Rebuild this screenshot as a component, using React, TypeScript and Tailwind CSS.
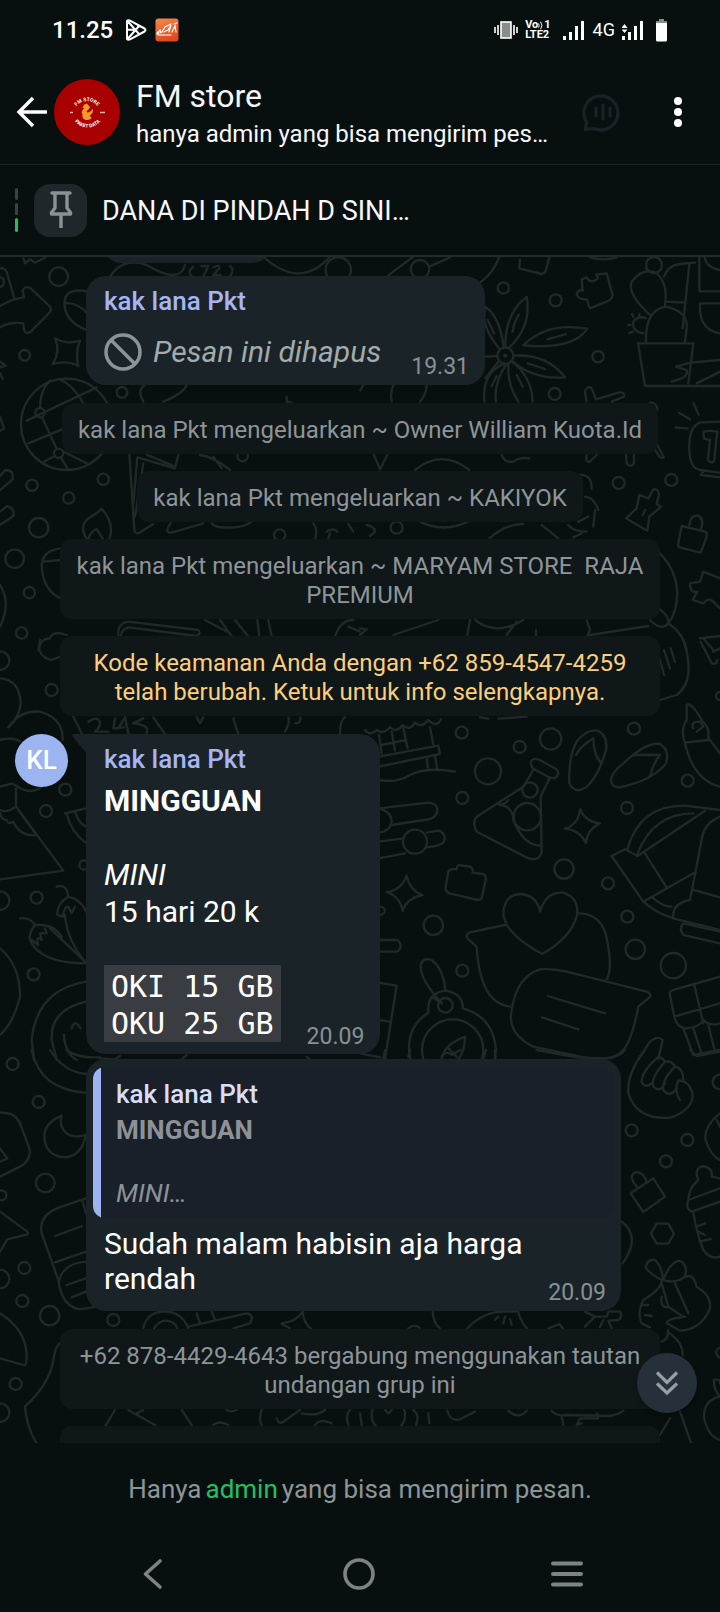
import type { ReactNode } from "react";

type Dot = [number, number, number];

function Doodles({ x, y, dots, paths }: { x: number; y: number; dots: Dot[]; paths: string[] }) {
  return (
    <g transform={`translate(${x} ${y}) scale(0.33333)`}>
      {dots.map(([cx, cy, r], i) => (
        <circle key={i} cx={cx} cy={cy} r={r} />
      ))}
      {paths.map((d, i) => (
        <path key={i} d={d} />
      ))}
    </g>
  );
}

function Wallpaper() {
  return (
    <svg
      aria-hidden="true"
      className="absolute inset-0 h-full w-full"
      viewBox="0 257 720 1186"
      preserveAspectRatio="xMidYMin slice"
      fill="none"
      stroke="#212828"
      strokeWidth="7"
      strokeLinecap="round"
      strokeLinejoin="round"
    >
      <Doodles
        x={0}
        y={250}
        dots={[
          [176, 80, 28], [74, 316, 16], [366, 427, 16], [310, 688, 17], [96, 706, 17], [206, 744, 17],
          [116, 833, 29], [44, 926, 28], [88, 1028, 17], [65, 1149, 17], [728, 618, 16], [839, 855, 17],
          [-4, 96, 16], [1015, 60, 38], [200, 523, 137], [120, 488, 14], [176, 610, 14],
        ]}
        paths={[
          "M0 168 Q40 145 72 142 L68 122 Q75 105 92 115 L150 170 Q156 178 150 186 L92 245 Q78 255 72 240 L70 220 Q30 215 0 232",
          "M165 265 Q200 285 240 272 Q225 310 235 348 Q200 330 158 342 Q183 305 165 265Z",
          "M80 512 L290 412 M85 580 L330 478 M120 474 Q120 420 150 392 M126 501 L170 597 M183 622 L205 660 M180 390 Q215 400 250 460 M164 618 L130 636 M188 604 L260 640",
          "M265 125 Q195 110 193 160 Q195 215 260 240 M193 160 Q230 155 262 190",
          "M0 55 Q14 52 20 66 L44 148 M0 335 L15 345 M0 352 L18 347 M0 370 L8 386 M0 500 L12 535 L0 542",
          "M0 678 L16 660 Q42 660 38 688 L0 720 M0 785 L22 768 Q44 775 40 798 L0 825",
          "M262 870 Q235 830 265 805 Q300 785 305 776 Q345 820 328 868 M265 870 Q270 845 290 837 L308 866",
          "M388 610 L403 840 Q408 855 418 848 L460 822 M412 622 L400 760 M430 640 L405 800 M412 622 L525 655 L535 615 M440 614 L525 650 M600 615 Q640 620 690 660 M640 620 L665 655",
          "M512 820 Q490 850 515 848 L610 820 M635 820 Q650 835 680 832 Q730 835 755 815",
          "M185 895 Q125 900 125 950 Q130 1020 180 1045 M130 935 L180 930 M0 1005 Q35 1060 0 1130",
          "M355 1160 Q350 1120 385 1115 L595 1140 Q605 1150 590 1158 L385 1132 Q365 1138 362 1158",
          "M115 1200 Q120 1165 150 1165 Q160 1140 200 1155",
          "M330 80 Q370 20 440 45 Q540 105 555 45 M580 50 Q560 65 575 78 M605 48 L625 48 L612 76 M640 52 Q660 42 658 55 L640 75 H662 M690 48 Q705 60 690 78",
          "M790 20 Q900 120 990 20 M70 25 L75 40 L90 28 L105 38 L135 24",
          "M430 455 Q410 420 435 405 M490 455 Q550 430 560 405 M860 440 V455 L875 458",
          "M615 1110 L690 1150 M660 1110 L700 1165 M705 1110 L745 1160 M772 1110 L778 1160 M805 1110 L815 1160 M1005 1160 Q1020 1110 1060 1110 M1045 1130 L1080 1145",
          "M940 820 Q955 840 945 865 M980 845 Q1000 830 1012 845 M1045 822 L1060 845 M985 865 L990 850",
        ]}
      />
      <Doodles
        x={360}
        y={250}
        dots={[
          [180, 58, 28], [430, 114, 17], [587, 151, 18], [714, 320, 17], [584, 432, 18], [776, 699, 18],
          [934, 690, 18], [110, 833, 18], [436, 317, 24], [436, 317, 3], [882, 45, 24],
        ]}
        paths={[
          "M80 80 L160 20 M208 50 L270 22 M418 20 Q400 70 362 96",
          "M480 30 L478 55 L545 72 Q556 70 558 60 L568 22 M690 22 Q730 34 770 22",
          "M665 88 L680 82 Q690 100 708 90 Q718 80 708 74 L740 70 L758 135 Q755 150 740 155 L690 175 L680 148 Q655 150 650 132 Q655 118 668 122Z",
          "M436 290 Q435 190 500 140 Q515 230 447 293 M458 245 Q462 215 476 195",
          "M490 286 Q560 215 682 236 Q640 300 495 286 M563 268 L618 252",
          "M460 317 Q560 310 615 382 Q520 390 455 332 M503 340 L555 357",
          "M420 298 Q360 230 376 170 Q420 200 431 292 M383 210 L402 250",
          "M432 341 Q365 370 373 455 M440 341 Q400 400 408 455 M446 341 Q440 400 475 455 M456 335 Q515 380 518 455 M395 408 L410 378 M470 375 L488 410",
          "M375 320 L410 318 M376 385 L415 335",
          "M870 195 Q800 130 815 95 Q850 50 890 70 Q925 100 915 165 M912 80 Q925 45 960 42 L1005 38 M988 42 L968 235 M915 155 L975 158",
          "M858 275 Q855 180 918 170 Q985 185 980 235 L975 275 M834 280 L1000 280 L985 400 M834 280 L855 408 L1080 408",
          "M858 205 Q835 195 820 215 Q815 245 850 250 M820 200 L816 192 M812 225 L804 225 M818 245 L808 250 M838 200 L838 192",
          "M948 350 L990 338 L1080 330 M948 350 L980 360 Q985 375 965 385 L935 395 M1010 400 L1080 365",
          "M1018 22 L1018 124 L1080 124 M1020 160 H1080 M1020 160 Q1015 240 1080 250 M1034 22 Q1040 55 1080 60",
          "M680 455 L675 425 Q682 405 695 415 L708 448 L775 428 Q795 425 792 440 L755 455 M870 458 Q890 455 892 480",
          "M890 580 L910 620 Q915 625 900 622 L885 600 M680 615 Q675 635 688 636 L710 615 M798 615 L800 640 Q812 655 822 640 L822 615",
          "M1080 515 L1020 517 Q990 530 988 580 Q985 655 1020 660 L1080 668 M1030 665 L1022 675 L1080 682 M1030 545 Q1050 540 1072 545 L1062 635 Q1050 640 1044 630 L1050 570 L1032 566Z M947 533 L983 535 M957 488 L990 508 M1000 460 L1016 494",
          "M838 735 L865 745 L880 718 Q895 715 897 735 L890 762 L903 770 L868 800 L862 842 L798 805 L830 775Z M848 795 L856 780",
          "M965 828 L1035 845 Q1043 848 1040 860 L1022 908 L958 892 Q952 888 955 880Z M988 825 Q992 795 1012 796 Q1035 805 1022 840",
          "M990 1000 L1020 995 L1030 965 L1080 985 M990 1000 Q990 1030 1012 1025 L998 1050 L1030 1060 Q1045 1040 1060 1055 L1080 1075",
          "M165 660 Q245 595 328 660 M180 815 Q250 850 325 815 M42 615 L60 658 L82 615 M425 615 Q435 640 460 635 Q480 620 508 625",
          "M655 675 Q695 670 695 715 M675 740 Q700 740 715 780 M705 780 L700 830 M625 825 Q640 845 680 845 M655 815 L685 800 M665 850 L640 862",
          "M388 865 Q440 820 490 822 M545 825 L595 865 M20 825 Q45 830 45 845 L30 858",
          "M895 905 Q950 960 952 1030 Q950 1090 925 1120 Q905 1145 870 1110 M890 1070 Q930 1100 925 1120 M925 1120 Q970 1150 980 1200 M690 1155 L865 1128",
          "M330 1110 L322 1155 M345 1110 Q410 1160 490 1110 M470 1115 L440 1155 M680 1110 L690 1140 L682 1158 M528 1140 L528 1158 M100 1155 L235 1110",
          "M0 1135 L20 1138 L0 1155 M1020 1165 L1080 1158 M1030 1165 L1060 1200 M95 455 Q90 425 100 405 M180 455 Q200 430 200 405 M1 420 L10 405",
        ]}
      />
      <Doodles
        x={0}
        y={640}
        dots={[
          [0, 62, 28], [155, 150, 18], [196, 449, 18], [138, 513, 18], [110, 773, 18], [0, 782, 28],
          [101, 1003, 18], [252, 675, 14],
        ]}
        paths={[
          "M120 0 Q108 50 155 60 L180 50 M0 115 Q60 120 62 190 Q60 230 25 262 M25 262 Q60 210 120 215 Q190 235 188 300",
          "M0 300 Q40 290 60 305 M0 440 L38 430 Q90 470 125 440 M48 445 V500 L190 692 L0 718 M48 500 Q20 520 0 510",
          "M0 520 Q5 540 20 540 Q25 555 40 545 Q60 590 110 585 L55 510",
          "M195 520 L258 505 M200 522 Q215 580 258 608 M225 515 Q235 550 258 560",
          "M220 230 L245 280 M460 232 L495 282 M590 232 L600 250 L610 232 M700 235 L715 282 M855 275 Q870 250 865 232 M885 250 Q905 250 900 232 M1020 280 Q1020 240 1035 232",
          "M265 245 Q295 225 300 250 Q300 262 285 275 H325 M355 265 L375 232 L385 280 M340 265 L372 262 M430 235 L400 250 Q450 255 440 278 M345 235 L340 265",
          "M170 740 Q200 730 205 770 Q245 780 258 815 M205 770 Q170 790 172 825 L190 830 Q190 800 205 800 L215 820 L225 800 M195 825 Q200 900 258 968",
          "M60 835 Q90 830 105 855 Q85 880 90 900 Q120 970 258 970 M105 855 Q160 850 185 890 M95 900 L115 915 Q105 885 125 900 L120 880 L140 880 L135 865 M150 865 L255 965",
          "M0 925 Q60 975 60 1070 Q40 1150 0 1185",
          "M258 1025 Q110 1050 95 1200 L102 1260 M258 1085 Q150 1110 155 1200 L170 1260 M192 1185 Q195 1240 230 1260 M215 1165 Q225 1135 242 1165",
          "M300 1255 L345 1258 L360 1248 M545 1258 L560 1245 M920 1250 L930 1258",
        ]}
      />
      <Doodles
        x={360}
        y={640}
        dots={[
          [305, 278, 18], [479, 321, 18], [572, 297, 32], [384, 394, 39], [307, 474, 18], [822, 266, 18],
          [983, 422, 18], [801, 504, 18], [612, 687, 29], [744, 730, 18], [220, 856, 29], [802, 830, 18],
          [826, 928, 29], [940, 977, 38], [307, 992, 18], [510, 450, 23], [502, 530, 41], [62, 812, 12],
          [165, 605, 36], [256, 1096, 22], [278, 1230, 92], [1080, 168, 12],
        ]}
        paths={[
          "M15 270 Q30 290 50 270 Q70 285 90 262 Q110 280 128 255 Q150 275 165 248 Q185 265 205 240 Q230 265 243 238 M57 285 L65 340 M95 275 L105 332 M130 265 L143 325 M65 315 L138 300 M210 262 L220 315",
          "M57 350 L235 317 L240 342 L57 380 M200 350 L203 382 M225 348 L232 388 M57 420 Q110 430 150 405 Q200 380 285 395 M360 232 L385 236 M415 236 L500 230",
          "M57 505 L205 488 Q235 490 232 515 Q225 535 205 538 L95 555 M57 505 Q95 515 95 545 Q90 575 57 578 M57 605 L130 595 M200 578 L235 572 Q260 580 252 605 Q245 618 200 622 M57 655 L135 640",
          "M512 370 Q515 352 535 358 L590 388 Q600 400 588 412 Q575 418 560 408 L518 385Z M520 390 L490 440 L350 530 Q335 550 350 575 L505 655 Q540 665 545 635 L542 470 L570 412",
          "M415 492 Q460 500 460 540 Q490 615 540 617 M420 495 Q440 490 445 480",
          "M628 430 Q625 350 650 305 Q680 265 715 272 Q745 290 738 330 Q715 410 680 440 Q645 465 628 430Z M648 345 Q660 320 700 295 Q700 340 720 365",
          "M755 430 Q745 405 790 370 Q860 305 900 312 Q930 330 918 370 Q880 420 780 442 Q760 442 755 430Z M820 345 L900 345 Q880 370 870 408",
          "M660 507 Q675 545 720 550 Q680 570 678 610 Q660 570 614 566 Q655 555 660 507Z M140 707 Q148 750 187 765 Q140 775 128 812 Q120 770 80 756 Q125 750 140 707Z",
          "M265 695 Q270 685 290 688 Q290 672 305 676 L330 680 Q340 685 338 698 L368 702 Q380 705 377 720 L365 775 Q360 782 345 778 L268 760 Q255 755 257 740Z",
          "M547 942 Q430 880 430 815 Q435 765 480 762 Q530 765 541 815 Q555 755 610 758 Q660 775 650 830 Q630 895 547 942Z",
          "M435 855 L330 877 Q312 885 325 898 L350 920 Q355 1000 375 1040 Q395 1090 450 1100 M655 820 Q720 820 738 885 Q760 985 740 1018",
          "M540 988 Q580 985 620 995 L860 1055 Q880 1065 865 1075 L835 1100 Q820 1180 800 1215 Q780 1260 700 1258 L520 1220 Q440 1180 455 1110 Q470 1010 540 988Z M563 1068 L735 1120 M546 1132 L655 1168",
          "M57 900 H110 Q122 905 122 918 Q120 932 110 935 H57 M57 1028 L110 1037 L75 1258 M57 1140 L90 1145",
          "M245 1088 Q180 1020 182 975 Q190 950 215 960 Q250 985 256 1050 M218 1072 L245 1090 M205 1118 Q200 1060 255 1052 Q310 1060 308 1105 Q400 1130 408 1230 L405 1260 M205 1118 Q140 1160 148 1240 L152 1260",
          "M245 1258 Q250 1215 315 1190 Q315 1230 295 1258 M262 1222 L290 1250",
          "M970 0 Q1010 120 950 165 L900 180 M900 60 L912 105 M912 30 L930 85 M932 25 L945 65",
          "M1022 5 L1055 70 Q1070 75 1072 60 M1060 35 L1080 25 M980 195 Q995 185 1028 245 Q1050 260 1045 300 L975 308 Q960 270 980 240Z M1000 265 Q990 245 1020 245 L1030 260 L1010 275 M975 310 Q1000 420 1080 440 M1050 300 L1080 340",
          "M803 625 Q840 495 975 497 L1080 510 M833 640 Q880 520 1000 520 M755 648 L795 628 L833 648 L1035 512 M755 648 L850 785 L1000 700 M855 640 L918 740 M1080 530 Q1030 550 1025 600 L990 780 Q935 790 940 835 L1080 870 M1000 750 L1080 772 M850 785 Q890 820 940 835 M880 775 Q910 800 935 800",
          "M970 850 L1080 875 M970 850 Q955 865 970 885 L1080 910",
          "M930 1065 Q925 1055 940 1050 L1080 1010 M930 1065 L943 1130 L1080 1090 M1003 1035 L1030 1150 M943 1130 Q950 1160 975 1165 Q1015 1165 1030 1140 Q1050 1160 1080 1150 M970 1165 L1000 1245 L1080 1230 M1000 1165 L1025 1240 M1045 1155 L1065 1235",
          "M835 1258 L870 1205 Q895 1185 908 1200 L895 1258",
        ]}
      />
      <Doodles
        x={0}
        y={1050}
        dots={[
          [38, 42, 18], [116, 156, 18], [136, 399, 28], [4, 436, 15], [73, 654, 18], [0, 687, 28],
          [67, 753, 18], [149, 797, 29], [340, 810, 18], [47, 1002, 18], [0, 1088, 28],
        ]}
        paths={[
          "M95 0 Q120 120 258 128 M150 0 Q190 65 258 72 M200 0 Q230 25 300 22",
          "M185 197 Q130 220 133 265 Q140 320 195 322 Q245 318 258 255 Q220 265 200 250 Q175 230 185 197Z",
          "M0 188 Q45 185 60 220 L88 295 Q95 330 60 350 L0 380 M0 295 L22 325 L0 335",
          "M0 485 L82 545 Q88 553 75 555 L22 568 L0 605",
          "M258 445 L170 475 Q115 500 125 550 L175 690 Q185 770 240 778 L290 770 M165 558 L246 528 M165 637 L258 605 M248 455 L258 490 M258 635 Q190 640 178 690 M200 705 L258 685 M215 742 L258 725",
          "M0 790 Q80 840 80 920 Q80 950 70 945 L0 925 M180 880 Q165 890 160 930 Q150 1000 75 1070 Q80 1130 108 1178",
          "M430 835 Q440 785 495 785 Q545 785 565 835 M462 835 Q480 810 500 812 Q525 815 532 835 M565 830 L740 790 Q765 795 750 820 L700 835 M590 790 L600 820 M635 785 L645 810",
          "M845 820 Q890 815 908 785 Q910 820 935 838 M845 822 L870 835",
          "M345 1080 L315 1130 M385 1080 L465 1125 M430 1080 L410 1090 M545 1080 L575 1125 M680 1080 Q695 1088 710 1080 M785 1080 Q775 1110 785 1125 M830 1105 Q835 1125 850 1115 L900 1080 M905 1090 Q950 1100 975 1080 M640 1125 Q655 1110 685 1125 M945 1125 Q960 1105 995 1120 M1045 1125 Q1035 1095 1050 1080",
        ]}
      />
      <Doodles
        x={360}
        y={1050}
        dots={[
          [815, 241, 18], [982, 270, 18], [918, 334, 18], [1080, 96, 22], [85, 1095, 50], [1085, 908, 16],
        ]}
        paths={[
          "M0 10 L60 22 M70 25 L75 0 M145 20 L150 0 M405 0 V25 M370 25 L378 0 M530 0 L650 22 L740 25 Q780 20 795 0 M245 20 Q260 0 275 15 L300 0 M990 0 L1010 18 L1080 5",
          "M855 0 Q800 70 805 130 Q830 210 930 203 Q1000 180 998 130 Q985 90 955 92 Q940 120 960 150 M890 25 Q845 65 845 95 Q855 120 880 95 M915 35 Q870 85 880 110 Q900 130 915 100 M945 50 Q905 90 910 120 Q930 145 950 115 M890 25 Q900 15 915 35 Q935 30 945 50 Q970 55 970 90",
          "M812 430 L880 385 L915 440 L850 486Z M832 412 Q800 375 830 366 Q855 370 860 398",
          "M890 521 L925 521 L942 551 L925 581 L890 581 L873 551Z",
          "M1080 190 Q1030 230 1037 270 Q1050 315 1080 330 M1070 210 L1080 230",
          "M1015 390 Q1000 355 1030 348 Q1060 355 1055 380 L1080 385 M1015 390 Q990 410 985 445 M985 450 L1080 415 M985 450 Q975 475 995 485 L1080 455 M1000 488 Q1010 550 1030 600 Q1050 630 1080 620 M1010 530 L1035 520 M1015 545 L1035 555 M1020 575 L1052 567",
          "M785 515 Q845 560 788 640",
          "M905 690 Q860 665 857 650 Q865 625 885 630 Q905 650 910 690 Q930 635 960 632 Q985 645 975 680 Q950 700 915 692 M905 695 Q900 720 850 750 Q830 790 845 820 L870 832 M850 765 L865 765 M855 795 L875 798 M905 700 L925 770 L970 800 M945 700 L985 790 M980 680 Q1000 670 1010 710 Q1060 740 1048 780 Q1020 840 960 842 L920 820 Q920 810 945 805 L975 800 M905 740 Q900 770 920 772 M925 840 Q925 870 905 875 M930 850 Q970 880 968 915",
          "M218 785 Q220 820 240 835 M322 835 Q370 785 430 785 L475 785 M475 785 Q480 810 500 835 M405 810 L415 800 M430 820 L435 800 M455 825 L450 808 M145 835 Q165 820 180 835 M565 835 L598 822 L608 835",
          "M675 785 L705 800 L675 830 M705 800 L740 800 L745 785 L780 785 Q790 800 775 810 L745 812 L755 835 M730 810 L720 832",
          "M0 1090 L5 1125 M160 1080 Q180 1095 168 1125 M205 1090 L208 1120 M75 1080 L85 1090 L95 1080 M262 1082 Q270 1115 300 1108 L345 1085 M445 1082 Q475 1110 500 1082 M575 1082 Q590 1100 620 1095 L750 1098 Q780 1092 790 1082 M605 1100 L610 1125 M650 1125 L660 1105 L715 1105 L710 1090 M650 1125 L665 1120",
          "M930 1105 L900 1155 M960 1085 L993 1178 M1062 990 Q1080 985 1080 1000 M1062 990 Q1060 1020 1080 1040 M1080 1040 Q1030 1050 1032 1105 Q1045 1160 1080 1170",
        ]}
      />
    </svg>
  );
}

function StatusBar() {
  return (
    <div className="flex h-[60px] items-center pl-[52px] pr-[53px] text-white">
      <span className="text-2xl font-medium">11.25</span>
      <svg className="ml-3 h-[22px] w-[22px]" viewBox="0 0 22 22" fill="none" stroke="#fff" strokeWidth="2" strokeLinejoin="round" aria-hidden="true">
        <path d="M2 2 Q3 .8 5 1.7 L19.5 9.5 Q21.3 11 19.5 12.5 L5 20.3 Q3 21.2 2 20Z M3 2.5 L14 15 M3 19.5 L14 7 M9 10.8 L2 10.8" />
      </svg>
      <svg className="ml-2 h-6 w-6" viewBox="0 0 24 24" aria-hidden="true">
        <defs>
          <linearGradient id="appTile" x1="0" y1="0" x2="0.3" y2="1">
            <stop offset="0" stopColor="#f58a4a" />
            <stop offset="1" stopColor="#dc4a22" />
          </linearGradient>
        </defs>
        <rect x="0.5" y="0.5" width="23" height="23" rx="3" fill="url(#appTile)" />
        <path d="M2 16 L5 12 L6 15 M7 14 L10 9 L16 6 M9 14 L13 12 L16 7 L14 14 M17 14 L20 8 L21 14 M19 6 L22 5 M3 17 H16" fill="none" stroke="#fff" strokeWidth="1.200" strokeLinecap="round" />
        <circle cx="3" cy="15" r="1.500" fill="#fff" />
      </svg>
      <div className="ml-auto flex items-center">
        <svg className="h-5 w-6" viewBox="0 0 24 20" aria-hidden="true">
          <rect x="7" y="2" width="10" height="16" fill="#8a8c8c" stroke="#fff" strokeWidth="1.600" />
          <path d="M1 7 V13 M4 5 V15 M20 5 V15 M23 7 V13" stroke="#fff" strokeWidth="1.600" />
        </svg>
        <div className="ml-[7px] flex flex-col text-[11px] font-bold leading-[10px]">
          <span className="flex items-center justify-between">
            Vo
            <svg className="h-[9px] w-[6px]" viewBox="0 0 6 9" fill="none" stroke="#fff" aria-hidden="true">
              <path d="M.5 2.5 Q2 4.5 .5 6.5 M2.5 .8 Q5.5 4.5 2.5 8.2" />
            </svg>
            1
          </span>
          <span>LTE2</span>
        </div>
        <svg className="ml-3 h-5 w-[22px]" viewBox="0 0 22 20" fill="#fff" aria-hidden="true">
          <path d="M0 16h3v4H0zM6 12h3v8H6zM12 6h3v14h-3zM18 1h3v19h-3z" />
        </svg>
        <span className="ml-2 text-lg">4G</span>
        <svg className="ml-[7px] h-5 w-[22px]" viewBox="0 0 22 20" fill="#fff" aria-hidden="true">
          <path d="M0 16h3v4H0zM6 12h3v8H6zM12 6h3v14h-3zM18 1h3v19h-3zM2.5 4L5.500 8H-.5zM2.500 13L-.5 9.500H5.500z" />
        </svg>
        <svg className="ml-3 h-6 w-[11px]" viewBox="0 0 11 24" aria-hidden="true">
          <path d="M3 1h5v2h3v3H0V3h3z" fill="#8a8c8c" />
          <path d="M0 5h11v17a1.500 1.500 0 0 1-1.500 1.500h-8A1.500 1.500 0 0 1 0 22z" fill="#fff" />
        </svg>
      </div>
    </div>
  );
}

function StoreLogo() {
  return (
    <svg className="h-[66px] w-[66px] shrink-0" viewBox="0 0 66 66" role="img" aria-label="FM store">
      <defs>
        <path id="arcTop" d="M20 35 A13 13 0 0 1 46 35" />
        <path id="arcBottom" d="M17 32 A16.500 16.500 0 0 0 50 32" />
      </defs>
      <circle cx="33" cy="33" r="33" fill="#a80000" />
      <text fontSize="5" fontWeight="700" fill="#fff" textAnchor="middle">
        <textPath href="#arcTop" startOffset="50%">FM STORE</textPath>
      </text>
      <text fontSize="5" fontWeight="700" fill="#fff" textAnchor="middle">
        <textPath href="#arcBottom" startOffset="50%">PAKET DATA</textPath>
      </text>
      <path d="M33 24.500 L35 27 Q37 28 34.500 30.500 Q31 33 34 33.500 Q38 32 38.500 29.500 Q40 33 37 35.500 Q34 37 38 38.500 Q36 41.500 32 41 Q27.500 40 28.500 35 Q26.500 33.500 29 30.500 Q31 29 28.500 28.500 Q29.500 25 33 24.500Z" fill="#f39a2b" />
      <path d="M16 33.500h3M46 33.500h5" stroke="#e8b0a8" strokeWidth="1.300" />
    </svg>
  );
}

function Header() {
  return (
    <header className="flex h-[105px] items-center border-b border-[#1c2425] pl-4 pr-[38px]">
      <button aria-label="Kembali" className="flex h-12 w-8 shrink-0 items-center">
        <svg className="h-8 w-8" viewBox="0 0 32 32" fill="none" stroke="#fff" strokeWidth="3.400" aria-hidden="true">
          <path d="M31 16H3M17 2L3 16l14 14" />
        </svg>
      </button>
      <div className="ml-1.5">
        <StoreLogo />
      </div>
      <div className="ml-4 min-w-0 pt-[3px]">
        <h1 className="truncate text-[32px] leading-9 text-[#f7f8fa]">FM store</h1>
        <p className="mt-1 truncate text-2xl leading-8 text-[#f7f8fa]">hanya admin yang bisa mengirim pes…</p>
      </div>
      <button aria-label="Obrolan suara" className="ml-auto shrink-0">
        <svg className="h-10 w-10" viewBox="0 0 40 40" fill="none" stroke="#1a2227" strokeWidth="3.200" strokeLinecap="round" strokeLinejoin="round" aria-hidden="true">
          <path d="M3.500 37.500 L4.500 30 A17 17 0 1 1 12 36.500 Z" />
          <path d="M14 16v8M21 13v14M28 16v8" />
        </svg>
      </button>
      <button aria-label="Opsi lainnya" className="ml-[52px] shrink-0">
        <svg className="h-8 w-2" viewBox="0 0 8 32" fill="#fff" aria-hidden="true">
          <circle cx="4" cy="5" r="4" />
          <circle cx="4" cy="16" r="4" />
          <circle cx="4" cy="27" r="4" />
        </svg>
      </button>
    </header>
  );
}

function PinnedMessage() {
  return (
    <section className="flex h-[92px] items-center border-b-2 border-[#232a2b] pl-[15px]">
      <div className="flex flex-col gap-[3px]">
        <span className="h-3 w-[3px] rounded-full bg-[#3a4244]" />
        <span className="h-3 w-[3px] rounded-full bg-[#3a4244]" />
        <span className="h-[14px] w-[3px] rounded-full bg-[#21c063]" />
      </div>
      <div className="ml-4 flex h-[53px] w-[53px] items-center justify-center rounded-2xl bg-[#20272a]">
        <svg className="h-10 w-6" viewBox="0 0 24 40" fill="none" stroke="#8a9294" strokeWidth="3.400" strokeLinejoin="round" aria-hidden="true">
          <path d="M3 3H21" strokeLinecap="round" />
          <path d="M6 3V18L2.500 22.500V24H21.500V22.500L18 18V3M12 24V38" />
        </svg>
      </div>
      <p className="ml-[15px] pt-[2px] text-[27px] leading-8 text-[#f7f8fa]">DANA DI PINDAH D SINI…</p>
    </section>
  );
}

function Notice({ children, tone = "text-[#8d9598]" }: { children: ReactNode; tone?: string }) {
  return (
    <p className={`max-w-full whitespace-pre-wrap rounded-xl bg-[#101719] px-4 pb-[9px] pt-[13px] text-center text-2xl leading-[29px] ${tone}`}>
      {children}
    </p>
  );
}

function Sender() {
  return <h2 className="text-[26px] font-medium leading-8 text-[#a5b5f5]">kak lana Pkt</h2>;
}

function Time({ children }: { children: string }) {
  return <time className="text-[23px] leading-7 text-[#879194]">{children}</time>;
}

function Chat() {
  return (
    <main className="relative overflow-hidden bg-[#070f0f]">
      <Wallpaper />
      <div className="relative flex flex-col">
        <div className="ml-[102px] h-[6px] w-[170px] overflow-hidden">
          <div className="-mt-10 h-[46px] rounded-[20px] bg-[#1a2428]" />
        </div>
        <article className="ml-[86px] mt-[13px] self-start rounded-[20px] bg-[#1a2428] pb-1 pl-[18px] pr-4 pt-[9px]">
          <Sender />
          <div className="flex items-end">
            <div className="flex items-center gap-[11px] pb-[10px] pt-4">
              <svg className="h-[38px] w-[38px]" viewBox="0 0 38 38" fill="none" stroke="#8b9598" strokeWidth="3.500" aria-hidden="true">
                <circle cx="19" cy="19" r="17" />
                <path d="M7 7L31 31" />
              </svg>
              <span className="text-[30px] italic leading-[38px] text-[#a3abad]">Pesan ini dihapus</span>
            </div>
            <span className="ml-[30px] flex">
              <Time>19.31</Time>
            </span>
          </div>
        </article>
        <div className="mx-[60px] my-[18px] flex flex-col items-center gap-[17px]">
          <Notice>kak lana Pkt mengeluarkan ~ Owner William Kuota.Id</Notice>
          <Notice>kak lana Pkt mengeluarkan ~ KAKIYOK</Notice>
          <Notice>{"kak lana Pkt mengeluarkan ~ MARYAM STORE  RAJA PREMIUM"}</Notice>
          <Notice tone="text-[#fbcf7c]">Kode keamanan Anda dengan +62 859-4547-4259 telah berubah. Ketuk untuk info selengkapnya.</Notice>
        </div>
        <div className="flex items-start pl-[15px]">
          <div className="flex h-[53px] w-[53px] shrink-0 items-center justify-center rounded-full bg-[#9cb4f0] text-[26px] font-medium text-white">
            KL
          </div>
          <article className="relative ml-[18px] rounded-[20px] rounded-tl-none bg-[#1a2428] pb-[3px] pl-[18px] pr-4 pt-[9px] text-white">
            <svg className="absolute -left-[14px] top-0 h-5 w-[15px]" viewBox="0 0 15 20" fill="#1a2428" aria-hidden="true">
              <path d="M15 0H2Q-1 0 1 3L15 20Z" />
            </svg>
            <Sender />
            <div className="flex items-end gap-[26px]">
              <div className="text-[30px] leading-[37px]">
                <p className="mt-[7px] font-bold">MINGGUAN</p>
                <p className="mt-[37px] italic">MINI</p>
                <p>15 hari 20 k</p>
                <pre className="mb-[9px] mt-[35px] bg-[#393d41] px-[7px] pt-[3px] font-['DejaVu_Sans_Mono',monospace]">{"OKI 15 GB\nOKU 25 GB"}</pre>
              </div>
              <Time>20.09</Time>
            </div>
          </article>
        </div>
        <article className="ml-[86px] mr-5 mt-[5px] max-w-[535px] rounded-[20px] bg-[#1a2428] px-[7px] pb-1 pt-2 text-white">
          <blockquote className="flex overflow-hidden rounded-xl bg-[#1a202a]">
            <span className="w-2 shrink-0 bg-[#9cb4f0]" />
            <div className="pb-[9px] pl-[15px] pt-[11px] text-[26px] leading-8 text-[#8d9296]">
              <p className="mb-1 font-medium text-[#d8def8]">kak lana Pkt</p>
              <p className="font-bold">MINGGUAN</p>
              <p className="mt-[31px] italic">MINI…</p>
            </div>
          </blockquote>
          <div className="flex items-end justify-between pl-[11px] pr-2">
            <p className="pb-[11px] pt-2 text-[30px] leading-[35px]">Sudah malam habisin aja harga rendah</p>
            <Time>20.09</Time>
          </div>
        </article>
        <div className="mx-[60px] mt-[18px] flex flex-col items-center gap-[17px]">
          <Notice>+62 878-4429-4643 bergabung menggunakan tautan undangan grup ini</Notice>
          <div className="h-[17px] w-full rounded-t-xl bg-[#101719]" />
        </div>
      </div>
      <button aria-label="Gulir ke bawah" className="absolute bottom-[30px] right-[23px] flex h-[60px] w-[60px] items-center justify-center rounded-full bg-[#25303a] shadow-md">
        <svg className="h-6 w-6" viewBox="0 0 24 24" fill="none" stroke="#95a0a6" strokeWidth="3.200" aria-hidden="true">
          <path d="M2 1.500L12 11.500L22 1.500M2 12.500L12 22L22 12.500" />
        </svg>
      </button>
    </main>
  );
}

function SystemNav() {
  return (
    <nav className="flex h-[77px] items-center justify-between pl-[139px] pr-[137px]">
      <button aria-label="Kembali ke layar sebelumnya">
        <svg className="h-8 w-7" viewBox="0 0 28 32" fill="none" stroke="#7d8384" strokeWidth="3.600" strokeLinecap="round" strokeLinejoin="round" aria-hidden="true">
          <path d="M21 3L6.500 16L21 29" />
        </svg>
      </button>
      <button aria-label="Beranda">
        <svg className="h-8 w-8" viewBox="0 0 32 32" fill="none" stroke="#7d8384" strokeWidth="3.600" aria-hidden="true">
          <circle cx="16" cy="16" r="14" />
        </svg>
      </button>
      <button aria-label="Aplikasi terbaru">
        <svg className="h-8 w-8" viewBox="0 0 32 32" fill="none" stroke="#7d8384" strokeWidth="4" strokeLinecap="round" aria-hidden="true">
          <path d="M2 5.500H30M2 16H30M2 26.500H30" />
        </svg>
      </button>
    </nav>
  );
}

export default function App() {
  return (
    <div className="min-h-screen bg-[#08100f] font-[Roboto,sans-serif]">
      <StatusBar />
      <Header />
      <PinnedMessage />
      <Chat />
      <footer>
        <p className="flex h-[92px] items-center justify-center gap-1 text-[26px] text-[#8d9598]">
          <span>Hanya</span>
          <a href="#admin" className="text-[#21c063]">admin</a>
          <span>yang bisa mengirim pesan.</span>
        </p>
        <SystemNav />
      </footer>
    </div>
  );
}
